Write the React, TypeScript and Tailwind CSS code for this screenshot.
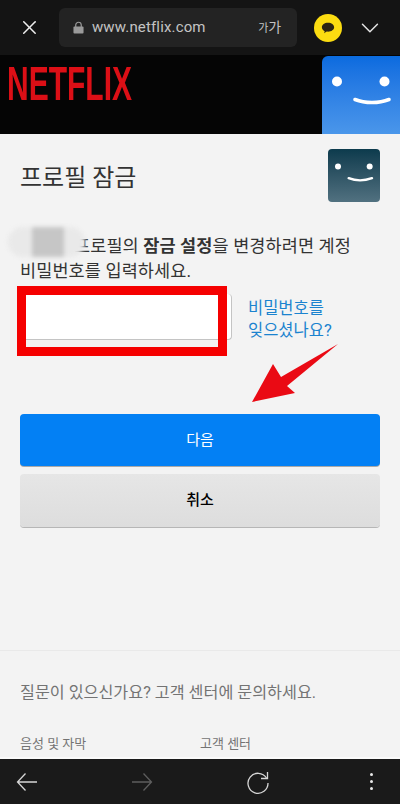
import React from "react";
import { ChevronDown, X } from "lucide-react";

const kr = "font-['Roboto','Noto_Sans_CJK_KR',sans-serif]";

function Face({ className, eyeR, smile }: { className: string; eyeR: number; smile: string }) {
  return (
    <div className={className}>
      <svg viewBox="0 0 78 78" className="h-full w-full" fill="none">
        <circle cx="15" cy="25.5" r={eyeR} fill="white" />
        <circle cx="62.5" cy="25.5" r={eyeR} fill="white" />
        <path d={smile} stroke="white" strokeWidth="3.6" strokeLinecap="round" />
      </svg>
    </div>
  );
}

function TopBar() {
  return (
    <div className="flex h-[55px] items-center bg-[#141414] pl-[18px] pr-[15px]">
      <X size={23} strokeWidth={1.6} className="text-[#eeeeee]" />
      <div className="ml-[18px] flex h-[39px] w-[239px] items-center rounded-md bg-[#232323] pl-[14px] pr-[16px]">
        <svg viewBox="0 0 12 13" className="h-[13px] w-[11px]">
          <path d="M3 6V3.8a3 3 0 0 1 6 0V6" fill="none" stroke="#9a9a9a" strokeWidth="1.3" />
          <rect x="0.5" y="5.5" width="11" height="7.5" rx="1" fill="#9a9a9a" />
        </svg>
        <span className="ml-[8px] flex-1 text-[15px] tracking-[0.15px] text-[#c4c4c4]">www.netflix.com</span>
        <span className="text-[11px] text-[#c4c4c4]">
          가<span className="text-[14px]">가</span>
        </span>
      </div>
      <div className="ml-[17px] flex h-[28px] w-[28px] items-center justify-center rounded-full bg-[#fbdc11]">
        <svg viewBox="0 0 16 16" className="h-[14px] w-[14px]">
          <path d="M8 2C4 2 1 4.3 1 7.2c0 1.9 1.3 3.5 3.2 4.4L3.6 14l2.9-1.9c.5.1 1 .1 1.5.1 4 0 7-2.2 7-5S12 2 8 2z" fill="#2b2413" />
        </svg>
      </div>
      <ChevronDown size={30} strokeWidth={1.2} className="ml-[13px] text-[#e4e4e4]" />
    </div>
  );
}

function NetflixHeader() {
  return (
    <div className="mt-px flex h-[78px] justify-between bg-[#050505]">
      <div className="ml-[7px] mt-[4px] h-fit w-[125px]">
        <span className="block origin-top-left scale-x-[0.625] whitespace-nowrap font-['Liberation_Sans',sans-serif] text-[48px] font-bold leading-[48px] text-[#dc0f16]">
          NETFLIX
        </span>
      </div>
      <Face
        className="h-[78px] w-[78px] rounded-tl-md bg-gradient-to-b from-[#0a6bdf] to-[#4a96ea]"
        eyeR={5}
        smile="M33 43.5c10 4 24 4 34 0"
      />
    </div>
  );
}

function Arrow() {
  return (
    <svg viewBox="248 340 92 64" className="absolute left-[248px] top-[206px] h-[64px] w-[92px]">
      <path d="M338 344 L281 377 L273 364 L252 402 L295 393 L287 386 Z" fill="#ea0a14" />
    </svg>
  );
}

function Form() {
  return (
    <div className="relative flex-1 bg-[#f3f3f3]">
      <div className="flex items-start justify-between px-[20px] pt-[15px]">
        <h1 className="mt-[11px] text-[24px] leading-[36px] text-[#333333]">프로필 잠금</h1>
        <Face
          className="h-[53px] w-[52px] overflow-hidden rounded bg-gradient-to-b from-[#0c3b4d] to-[#517180]"
          eyeR={4.5}
          smile="M31 43c10 4 24 4 35 0"
        />
      </div>

      <p className="ml-[20px] mr-[30px] mt-[32px] text-[17.5px] leading-[25px] tracking-[0.1px] text-[#333333]">
        <span className="inline-block w-[54px]" />
        프로필의 <b>잠금 설정</b>을 변경하려면 계정
        <br />
        비밀번호를 입력하세요.
      </p>

      {/* blurred-out profile name */}
      <div className="absolute left-[8px] top-[93px] h-[30px] w-[77px] rounded-full bg-[#e9e9e9] blur-[2px]">
        <div className="ml-[24px] h-full w-[32px] bg-[#c6c6c6]" />
      </div>

      <div className="ml-[20px] mt-[10px] flex items-start">
        <div className="h-[46px] w-[212px] rounded-sm border-b border-r border-[#c4c4c4] bg-white" />
        <a className="ml-[16px] mt-[4px] text-[16.5px] leading-[22px] text-[#1b83cf]">
          비밀번호를
          <br />
          잊으셨나요?
        </a>
      </div>

      <div className="mx-[20px] mt-[72px] flex flex-col gap-[8px]">
        <button className="h-[52px] rounded-sm bg-[#0380f4] text-[15px] text-white shadow-[0_1px_0_rgba(0,0,0,0.3)]">
          다음
        </button>
        <button className="h-[53px] rounded-sm bg-gradient-to-b from-[#e6e6e6] to-[#dddddd] text-[15px] font-medium text-black shadow-[0_1px_0_rgba(0,0,0,0.25)]">
          취소
        </button>
      </div>

      <div className="mt-[123px] border-t border-[#e9e9e9] px-[20px] pt-[31px]">
        <p className="text-[16.2px] leading-[22px] text-[#737373]">질문이 있으신가요? 고객 센터에 문의하세요.</p>
        <div className="mt-[30px] flex text-[13px] leading-[20px] text-[#737373]">
          <span className="w-[180px]">음성 및 자막</span>
          <span>고객 센터</span>
        </div>
      </div>

      <div className="absolute left-[17px] top-[152px] h-[70px] w-[210px] border-[9.5px] border-[#f50000]" />
      <Arrow />
    </div>
  );
}

function BottomBar() {
  return (
    <div className="flex h-[47px] items-center border-t-2 border-[#fafafa] bg-[#1a1a1a] pl-[16px] pr-[27px]">
      <svg viewBox="0 0 22 22" className="h-[22px] w-[22px]" fill="none" stroke="#d6d6d6" strokeWidth="1.3">
        <path d="M21 11H1.5M9.5 2.5 1.5 11l8 8.5" />
      </svg>
      <svg viewBox="0 0 22 22" className="ml-[93px] h-[22px] w-[22px]" fill="none" stroke="#5e5e5e" strokeWidth="1.3">
        <path d="M1 11h19.5M12.5 2.5l8 8.5-8 8.5" />
      </svg>
      <svg viewBox="0 0 24 24" className="ml-[93px] h-[24px] w-[24px]" fill="none" stroke="#d6d6d6" strokeWidth="1.3">
        <path d="M20.5 8A10 10 0 1 0 22 13" />
        <path d="M21.5 2v6.5H15" />
      </svg>
      <div className="ml-auto flex flex-col gap-[4px]">
        <div className="h-[3px] w-[3px] rounded-full bg-[#e8e8e8]" />
        <div className="h-[3px] w-[3px] rounded-full bg-[#e8e8e8]" />
        <div className="h-[3px] w-[3px] rounded-full bg-[#e8e8e8]" />
      </div>
    </div>
  );
}

export default function App() {
  return (
    <div className={`flex h-[804px] w-[400px] flex-col overflow-hidden bg-[#050505] ${kr}`}>
      <TopBar />
      <NetflixHeader />
      <Form />
      <BottomBar />
    </div>
  );
}
